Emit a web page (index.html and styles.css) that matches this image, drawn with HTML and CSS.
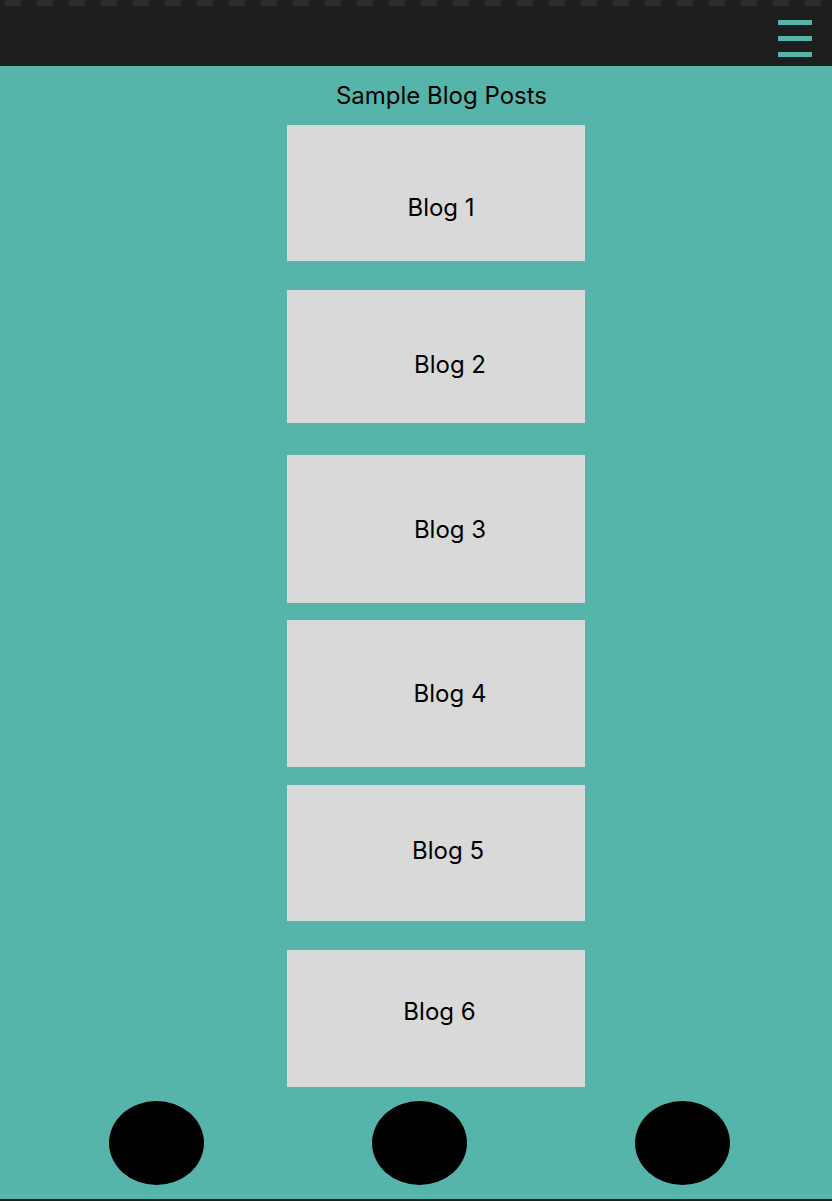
FILE: index.html
```html
<!DOCTYPE html>
<html lang="en">
<head>
<meta charset="utf-8">
<title>Sample Blog Posts</title>
<link rel="stylesheet" href="styles.css">
</head>
<body>
<header class="topbar">
  <button class="menu" aria-label="Menu">
    <span class="menu-bar"></span>
    <span class="menu-bar"></span>
    <span class="menu-bar"></span>
  </button>
</header>
<main class="page">
  <h1 class="title">Sample Blog Posts</h1>
  <section class="posts">
    <article class="card card-1"><span class="card-label">Blog 1</span></article>
    <article class="card card-2"><span class="card-label">Blog 2</span></article>
    <article class="card card-3"><span class="card-label">Blog 3</span></article>
    <article class="card card-4"><span class="card-label">Blog 4</span></article>
    <article class="card card-5"><span class="card-label">Blog 5</span></article>
    <article class="card card-6"><span class="card-label">Blog 6</span></article>
  </section>
  <nav class="dots">
    <span class="dot"></span>
    <span class="dot"></span>
    <span class="dot"></span>
  </nav>
</main>
</body>
</html>
```
FILE: styles.css
```css
* { box-sizing: border-box; }
html, body { margin: 0; padding: 0; }
body {
  background: #1e1e1e;
  font-family: "Inter", "Liberation Sans", sans-serif;
  color: #000;
  min-height: 1201px;
}
.topbar {
  height: 66px;
  background-color: #1e1e1e;
  background-image: linear-gradient(to right, #1e1e1e 0 5px, #2c2c2c 5px 21px, #1e1e1e 21px 32px);
  background-size: 32px 6px;
  background-repeat: repeat-x;
  display: flex;
  justify-content: flex-end;
  align-items: flex-start;
  padding: 20px 20px 0 0;
}
.menu {
  border: 0;
  padding: 0;
  background: none;
  display: flex;
  flex-direction: column;
  gap: 11px;
  cursor: pointer;
}
.menu-bar {
  display: block;
  width: 34px;
  height: 5px;
  background: #55b5aa;
}
.page {
  background: #55b5aa;
  height: 1133px;
  display: flex;
  flex-direction: column;
}
.title {
  margin: 15px 0 0 0;
  padding-left: 51px;
  text-align: center;
  font-size: 24px;
  line-height: 29px;
  font-weight: 400;
}
.posts {
  margin-top: 15px;
  display: flex;
  flex-direction: column;
  align-items: center;
  padding-left: 40px;
}
.card {
  width: 298px;
  background: #d9d9d9;
  display: flex;
  align-items: center;
  justify-content: center;
  font-size: 24px;
  line-height: 29px;
}
.card-1 { height: 136px; margin-bottom: 29px; padding: 28px 0 0 10px; }
.card-2 { height: 133px; margin-bottom: 32px; padding: 15px 0 0 28px; }
.card-3 { height: 148px; margin-bottom: 17px; padding: 0 0 0 28px; }
.card-4 { height: 147px; margin-bottom: 18px; padding: 0 0 0 28px; }
.card-5 { height: 136px; margin-bottom: 29px; padding: 0 0 6px 24px; }
.card-6 { height: 137px; padding: 0 0 15px 7px; }
.dots {
  margin-top: 14px;
  display: flex;
  gap: 168px;
  padding-left: 109px;
}
.dot {
  width: 95px;
  height: 84px;
  border-radius: 50%;
  background: #000;
}
```
